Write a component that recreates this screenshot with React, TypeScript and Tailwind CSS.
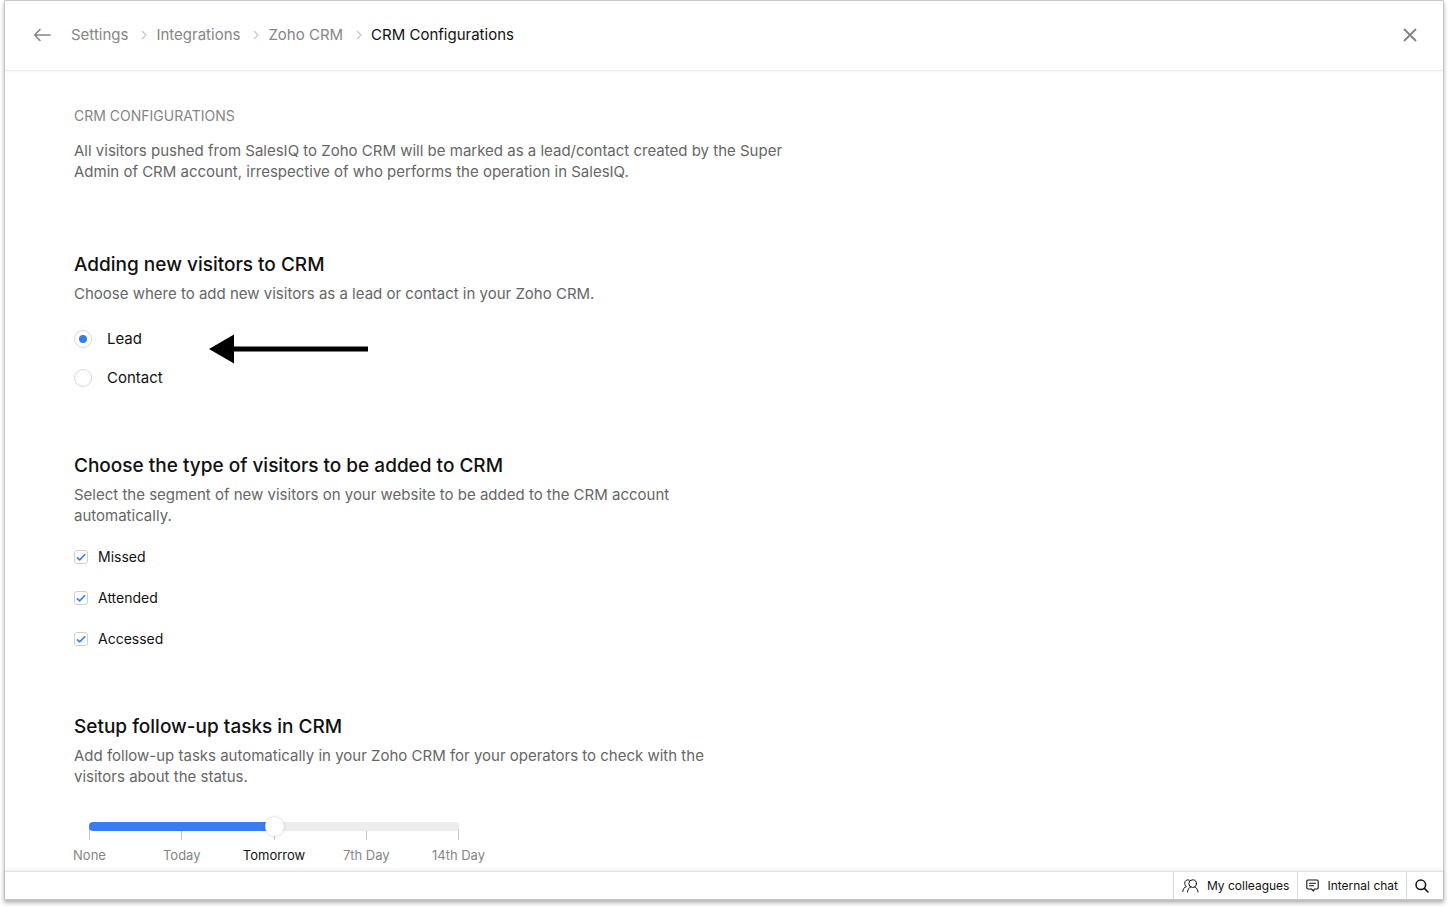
import React, { useState } from "react";

type SectionProps = {
  title: string;
  description: string;
  className?: string;
  children: React.ReactNode;
};

const parents = ["Settings", "Integrations", "Zoho CRM"];
const visitorTypes = ["Missed", "Attended", "Accessed"];
const followUps = ["None", "Today", "Tomorrow", "7th Day", "14th Day"];

const BackIcon = () => (
  <svg width="18" height="14" viewBox="0 0 18 14" fill="none" stroke="currentColor" strokeWidth="1.6" strokeLinecap="round" strokeLinejoin="round">
    <path d="M17 7H2M7 1.500 1.700 7 7 12.500" />
  </svg>
);

const CloseIcon = () => (
  <svg width="14" height="14" viewBox="0 0 14 14" fill="none" stroke="currentColor" strokeWidth="2">
    <path d="M1 1l12 12M13 1 1 13" />
  </svg>
);

const SeparatorIcon = () => (
  <svg className="ml-[13px] mr-[9px]" width="6" height="10" viewBox="0 0 6 10" fill="none" stroke="#c8c8c8" strokeWidth="1.200">
    <path d="M1 1l4 4-4 4" />
  </svg>
);

const Header = () => (
  <header className="relative z-10 flex h-[70px] shrink-0 items-center justify-between border-b border-[#ececec] pb-0.5 pl-7 pr-[26px] shadow-[0_1px_2px_rgba(0,0,0,0.04)]">
    <div className="flex items-center">
      <button aria-label="Back" className="text-[#858585]">
        <BackIcon />
      </button>
      <nav aria-label="Breadcrumb" className="ml-5">
        <ol className="flex items-center text-[15px] leading-5">
          {parents.map((label) => (
            <li key={label} className="flex items-center">
              <a href="#" className="text-[#858585]">
                {label}
              </a>
              <SeparatorIcon />
            </li>
          ))}
          <li aria-current="page" className="text-[#111]">
            CRM Configurations
          </li>
        </ol>
      </nav>
    </div>
    <button aria-label="Close" className="text-[#858585]">
      <CloseIcon />
    </button>
  </header>
);

const Section = ({ title, description, className, children }: SectionProps) => (
  <section className={className}>
    <h2 className="text-[19px] font-medium leading-7 text-[#111]">{title}</h2>
    <p className="mt-1 max-w-[640px] text-[15px] leading-[21px] text-[#666]">{description}</p>
    {children}
  </section>
);

const VisitorTarget = () => {
  const [target, setTarget] = useState("Lead");

  return (
    <div role="radiogroup" aria-label="Add new visitors as" className="relative mt-[25px] flex flex-col gap-[19px]">
      {["Lead", "Contact"].map((option) => (
        <label key={option} className="flex w-fit items-center gap-[15px] text-[15px] leading-5 text-[#111]">
          <input
            type="radio"
            name="target"
            checked={target === option}
            onChange={() => setTarget(option)}
            className="grid h-[18px] w-[18px] appearance-none place-items-center rounded-full border border-[#d8d8d8] before:h-2 before:w-2 before:rounded-full checked:before:bg-[#347df7]"
          />
          {option}
        </label>
      ))}
      <svg className="absolute left-[135px] top-[5px]" width="159" height="30" viewBox="0 0 159 30" aria-hidden="true">
        <path d="M0 15 25 0.5V12.5H159V17.5H25V29.5Z" fill="#000" />
      </svg>
    </div>
  );
};

const VisitorTypes = () => {
  const [selected, setSelected] = useState<string[]>(visitorTypes);

  const toggle = (type: string) => {
    setSelected(selected.includes(type) ? selected.filter((t) => t !== type) : [...selected, type]);
  };

  return (
    <div className="mt-[21px] flex flex-col gap-[21px]">
      {visitorTypes.map((type) => (
        <label key={type} className="flex w-fit items-center gap-2.5 text-[14px] leading-5 text-[#111]">
          <span className="relative h-3.5 w-3.5">
            <input
              type="checkbox"
              checked={selected.includes(type)}
              onChange={() => toggle(type)}
              className="peer block h-3.5 w-3.5 appearance-none rounded-[3px] border border-[#d0d0d0]"
            />
            <svg
              className="pointer-events-none absolute inset-0 hidden peer-checked:block"
              width="14"
              height="14"
              viewBox="0 0 14 14"
              fill="none"
              stroke="#347df7"
              strokeWidth="1.600"
            >
              <path d="M2.900 7.300 5.700 9.800 11.200 4.300" />
            </svg>
          </span>
          {type}
        </label>
      ))}
    </div>
  );
};

const FollowUpSlider = () => {
  const [day, setDay] = useState(2);
  const percent = (day / (followUps.length - 1)) * 100;

  return (
    <div className="ml-[15px] mt-[29px] w-[370px]">
      <input
        type="range"
        aria-label="Follow-up day"
        min={0}
        max={followUps.length - 1}
        value={day}
        onChange={(e) => setDay(Number(e.target.value))}
        style={{ "--fill": `${percent}%` } as React.CSSProperties}
        className="relative z-10 block h-5 w-full appearance-none bg-transparent [&::-webkit-slider-runnable-track]:h-[9px] [&::-webkit-slider-runnable-track]:rounded-[4px] [&::-webkit-slider-runnable-track]:bg-[linear-gradient(to_right,#347df7_var(--fill),#ededed_var(--fill))] [&::-webkit-slider-thumb]:-mt-[5px] [&::-webkit-slider-thumb]:h-[19px] [&::-webkit-slider-thumb]:w-[19px] [&::-webkit-slider-thumb]:appearance-none [&::-webkit-slider-thumb]:rounded-full [&::-webkit-slider-thumb]:bg-white [&::-webkit-slider-thumb]:shadow-[0_0_3px_rgba(0,0,0,0.2)]"
      />
      <ul className="-mt-2 flex justify-between">
        {followUps.map((label, index) => (
          <li key={label} className="flex w-px flex-col items-center">
            <span className="h-3 w-px bg-[#c4c4c4]" />
            <span
              className={`mt-1.5 whitespace-nowrap text-[13px] leading-[18px] ${index === day ? "text-[#111]" : "text-[#858585]"}`}
            >
              {label}
            </span>
          </li>
        ))}
      </ul>
    </div>
  );
};

const ColleaguesIcon = () => (
  <svg width="17" height="14" viewBox="0 0 17 14" fill="none" stroke="currentColor" strokeWidth="1" strokeLinecap="round">
    <circle cx="10.6" cy="4.6" r="3.8" />
    <path d="M5.500 13c.2-2.700 1.500-4.400 3.300-5.100M12.500 7.900c2 .7 3.300 2.400 3.500 5.100" />
    <path d="M7.100 1C4.800.2 2.700 1.700 2.700 4.300c0 1.500.7 2.600 1.800 3.300C2.200 8.200 1 9.900.8 12.500" />
  </svg>
);

const ChatIcon = () => (
  <svg width="13" height="13" viewBox="0 0 13 13" fill="none" stroke="currentColor" strokeWidth="1.100" strokeLinecap="round" strokeLinejoin="round">
    <path d="M2 1h9a1.200 1.200 0 0 1 1.200 1.200v6.600A1.200 1.200 0 0 1 11 10H8.500L7.500 12 5.500 10H2A1.200 1.200 0 0 1 .8 8.800V2.200A1.200 1.200 0 0 1 2 1Z" />
    <path d="M3.500 4.200h6M3.500 6.800h4" />
  </svg>
);

const SearchIcon = () => (
  <svg width="14" height="14" viewBox="0 0 14 14" fill="none" stroke="currentColor" strokeWidth="1.500" strokeLinecap="round">
    <circle cx="5.800" cy="5.800" r="4.800" />
    <path d="M9.400 9.400 13 13" />
  </svg>
);

const Footer = () => (
  <footer className="relative z-10 flex h-7 shrink-0 justify-end border-t border-[#e2e2e2] bg-white text-[12px] text-[#111] shadow-[0_-2px_4px_rgba(0,0,0,0.06)]">
    <button className="flex items-center gap-2 border-l border-[#d8d8d8] px-2">
      <ColleaguesIcon />
      My colleagues
    </button>
    <button className="flex items-center gap-2 border-l border-[#d8d8d8] px-2">
      <ChatIcon />
      Internal chat
    </button>
    <button aria-label="Search" className="flex items-center border-l border-[#d8d8d8] pl-2 pr-3.5">
      <SearchIcon />
    </button>
  </footer>
);

const App = () => {
  return (
    <div className="h-screen bg-white px-1 pb-2 font-['Inter','Liberation_Sans',sans-serif]">
      <div className="flex h-full flex-col border border-[#c8c8c8] bg-white shadow-[0_3px_4px_rgba(0,0,0,0.3)]">
        <Header />
        <main className="min-h-0 flex-1 overflow-y-auto pl-[69px] pr-6 pt-[35px]">
          <h1 className="text-[14px] leading-5 text-[#858585]">CRM CONFIGURATIONS</h1>
          <p className="mt-3.5 max-w-[720px] text-[15px] leading-[21px] text-[#666]">
            All visitors pushed from SalesIQ to Zoho CRM will be marked as a lead/contact created by the Super Admin of
            CRM account, irrespective of who performs the operation in SalesIQ.
          </p>
          <Section
            className="mt-[69px]"
            title="Adding new visitors to CRM"
            description="Choose where to add new visitors as a lead or contact in your Zoho CRM."
          >
            <VisitorTarget />
          </Section>
          <Section
            className="mt-16"
            title="Choose the type of visitors to be added to CRM"
            description="Select the segment of new visitors on your website to be added to the CRM account automatically."
          >
            <VisitorTypes />
          </Section>
          <Section
            className="mt-16"
            title="Setup follow-up tasks in CRM"
            description="Add follow-up tasks automatically in your Zoho CRM for your operators to check with the visitors about the status."
          >
            <FollowUpSlider />
          </Section>
        </main>
        <Footer />
      </div>
    </div>
  );
};

export default App;
